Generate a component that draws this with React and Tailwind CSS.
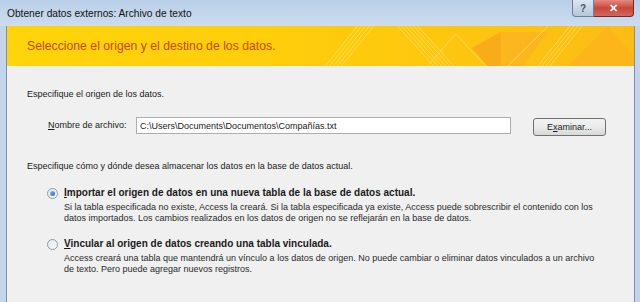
import React from 'react';

const font = { fontFamily: '"Liberation Sans", Arial, sans-serif' };

const BannerArt = () => (
    <svg className="absolute inset-0 h-full w-full" viewBox="0 0 626 40" preserveAspectRatio="none">
        <defs>
            <linearGradient id="bn" x1="0" y1="0" x2="1" y2="0">
                <stop offset="0" stopColor="#ffd40a" />
                <stop offset="0.55" stopColor="#fecb0c" />
                <stop offset="1" stopColor="#fcbc16" />
            </linearGradient>
        </defs>
        <rect width="626" height="40" fill="url(#bn)" />
        <g stroke="#ffe680" strokeWidth="0.8" opacity="0.75">
            <line x1="318" y1="40" x2="350" y2="0" />
            <line x1="322" y1="40" x2="354" y2="0" />
            <line x1="326" y1="40" x2="358" y2="0" />
            <line x1="330" y1="40" x2="362" y2="0" />
            <line x1="334" y1="40" x2="366" y2="0" />
            <line x1="390" y1="0" x2="426" y2="40" />
            <line x1="394" y1="0" x2="430" y2="40" />
            <line x1="398" y1="0" x2="434" y2="40" />
            <line x1="402" y1="0" x2="438" y2="40" />
            <line x1="406" y1="0" x2="442" y2="40" />
            <line x1="410" y1="0" x2="446" y2="40" />
            <line x1="420" y1="40" x2="448" y2="8" />
            <line x1="448" y1="8" x2="478" y2="40" />
            <line x1="530" y1="40" x2="562" y2="0" />
            <line x1="534" y1="40" x2="566" y2="0" />
            <line x1="538" y1="40" x2="570" y2="0" />
            <line x1="542" y1="40" x2="574" y2="0" />
        </g>
        <polygon points="464,22 493,6 493,40 480,40" fill="#f7a81b" opacity="0.85" />
        <polygon points="493,6 540,6 515,40 493,40" fill="#f9b222" opacity="0.7" />
        <polygon points="560,40 600,0 626,30 626,40" fill="#fbb41a" opacity="0.8" />
        <line x1="500" y1="40" x2="540" y2="0" stroke="#ffe07a" strokeWidth="0.8" />
    </svg>
);

const Radio = ({ checked }) => (
    <span className="relative flex h-[11px] w-[11px] shrink-0 items-center justify-center rounded-full border border-[#8e9aa8] bg-gradient-to-br from-[#e4e6e9] to-[#fbfbfb]">
        {checked && <span className="h-[5px] w-[5px] rounded-full bg-gradient-to-br from-[#7ac0f0] to-[#1a6fbf]" />}
    </span>
);

const Option = ({ checked, accel, rest, lines }) => (
    <div className="flex">
        <div className="w-[57px] shrink-0 flex justify-end pr-[6px] pt-[2px]">
            <Radio checked={checked} />
        </div>
        <div>
            <div className="text-[10px] font-bold leading-[13px] text-[#1a1a1a]">
                <span className="underline">{accel}</span>{rest}
            </div>
            <div className="mt-[3px] text-[9px] leading-[11px] text-[#2a2a2a]">
                {lines.map((l, i) => <div key={i}>{l}</div>)}
            </div>
        </div>
    </div>
);

export default function App() {
    return (
        <div className="flex h-[302px] w-[640px] flex-col overflow-hidden bg-[#c5d7ec]" style={font}>
            <div className="flex h-[26px] shrink-0 items-start bg-gradient-to-b from-[#b9cfe8] to-[#cddcef]">
                <div className="pl-[7px] pt-[7px] text-[10.2px] leading-[13px] text-[#111]">
                    Obtener datos externos: Archivo de texto
                </div>
                <div className="ml-auto mr-[6px] flex">
                    <div className="flex h-[17px] w-[22px] items-center justify-center rounded-bl-[4px] border border-t-0 border-[#6d7f96] bg-gradient-to-b from-[#dde6f1] to-[#b7c6d9] text-[10px] font-bold text-[#45566d]">
                        ?
                    </div>
                    <div className="flex h-[17px] w-[40px] items-center justify-center rounded-br-[4px] border border-l-0 border-t-0 border-[#6d2b2b] bg-gradient-to-b from-[#e28a80] via-[#c9453a] to-[#d0685b] text-[11px] font-bold text-white">
                        ✕
                    </div>
                </div>
            </div>
            <div className="flex flex-1">
                <div className="w-[7px] shrink-0 border-r border-[#7f8fa4] bg-[#c3d5eb]" />
                <div className="flex flex-1 flex-col bg-[#f0f0f0]">
                    <div className="relative h-[40px] shrink-0">
                        <BannerArt />
                        <div className="relative pl-[20px] pt-[12px] text-[12.25px] leading-[16px] text-[#c34a00]">
                            Seleccione el origen y el destino de los datos.
                        </div>
                    </div>
                    <div className="flex flex-col pt-[22px] text-[9px] leading-[12px] text-[#1a1a1a]">
                        <div className="pl-[20px]">Especifique el origen de los datos.</div>
                        <div className="mt-[17px] flex items-start">
                            <div className="w-[129px] shrink-0 pl-[41px] pt-[2px]">
                                <span className="underline">N</span>ombre de archivo:
                            </div>
                            <div className="flex h-[17px] w-[375px] items-center border border-[#abadb3] bg-white pl-[3px]">
                                C:\Users\Documents\Documentos\Compañías.txt
                            </div>
                            <div className="ml-[22px] mt-[1px] flex h-[18px] w-[73px] items-center justify-center rounded-[3px] border border-[#707070] bg-gradient-to-b from-[#f2f2f2] via-[#ebebeb] to-[#d8d8d8]">
                                E<span className="underline">x</span>aminar...
                            </div>
                        </div>
                        <div className="mt-[24px] pl-[20px]">
                            Especifique cómo y dónde desea almacenar los datos en la base de datos actual.
                        </div>
                        <div className="mt-[14px]">
                            <Option
                                checked
                                accel="I"
                                rest="mportar el origen de datos en una nueva tabla de la base de datos actual."
                                lines={[
                                    'Si la tabla especificada no existe, Access la creará. Si la tabla especificada ya existe, Access puede sobrescribir el contenido con los',
                                    'datos importados. Los cambios realizados en los datos de origen no se reflejarán en la base de datos.',
                                ]}
                            />
                        </div>
                        <div className="mt-[13px]">
                            <Option
                                accel="V"
                                rest="incular al origen de datos creando una tabla vinculada."
                                lines={[
                                    'Access creará una tabla que mantendrá un vínculo a los datos de origen. No puede cambiar o eliminar datos vinculados a un archivo',
                                    'de texto. Pero puede agregar nuevos registros.',
                                ]}
                            />
                        </div>
                    </div>
                </div>
                <div className="w-[6px] shrink-0 border-l border-[#7f8fa4] bg-[#c3d5eb]" />
            </div>
        </div>
    );
}
